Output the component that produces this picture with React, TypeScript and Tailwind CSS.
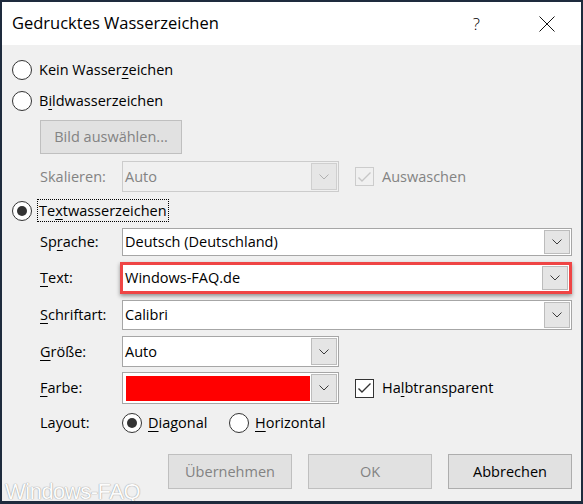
import type { ReactNode } from 'react';
import clsx from 'clsx';

function Chevron({ muted = false }: { muted?: boolean }) {
  return (
    <svg width="10" height="6" viewBox="0 0 10 6" fill="none">
      <path d="M0.5 0.5L5 5L9.5 0.5" stroke={muted ? '#b0b0b0' : '#3c3c3c'} strokeWidth="1" />
    </svg>
  );
}

function Select({
  children,
  className,
  disabled = false,
  bare = false,
}: {
  children?: ReactNode;
  className?: string;
  disabled?: boolean;
  bare?: boolean;
}) {
  return (
    <div
      className={clsx(
        'flex items-stretch',
        !bare && 'border',
        disabled ? 'border-[#cccccc] bg-[#f0f0f0]' : 'border-[#a6a6a6] bg-white',
        className,
      )}
    >
      <div className={clsx('flex flex-1 items-center pl-[2px]', disabled ? 'text-[#838383]' : 'text-black')}>
        {children}
      </div>
      <div
        className={clsx(
          'm-[1px] flex w-[26px] shrink-0 items-center justify-center border',
          disabled ? 'border-[#cfcfcf] bg-[#e6e6e6]' : 'border-[#bcbcbc] bg-[#e5e5e5]',
        )}
      >
        <Chevron muted={disabled} />
      </div>
    </div>
  );
}

function Radio({ checked = false }: { checked?: boolean }) {
  return (
    <div className="flex h-[20px] w-[20px] shrink-0 items-center justify-center rounded-full border border-[#333333] bg-white">
      {checked && <div className="h-[10px] w-[10px] rounded-full bg-[#333333]" />}
    </div>
  );
}

function Checkbox({ checked = false, disabled = false }: { checked?: boolean; disabled?: boolean }) {
  return (
    <div
      className={clsx(
        'flex h-[19px] w-[19px] shrink-0 items-center justify-center border',
        disabled ? 'border-[#cccccc] bg-[#f0f0f0]' : 'border-[#333333] bg-white',
      )}
    >
      {checked && (
        <svg width="15" height="12" viewBox="0 0 15 12" fill="none">
          <path d="M1.5 6.5L5 10L13.5 1.5" stroke={disabled ? '#c6c6c6' : '#333333'} strokeWidth="1.4" />
        </svg>
      )}
    </div>
  );
}

function Key({ children }: { children: ReactNode }) {
  return <span className="underline underline-offset-[3px] decoration-1">{children}</span>;
}

function Label({ children, muted = false, w = 'w-[82px]' }: { children: ReactNode; muted?: boolean; w?: string }) {
  return <div className={clsx('ml-[28px] shrink-0', w, muted ? 'text-[#838383]' : 'text-black')}>{children}</div>;
}

function Button({ children, disabled = false }: { children: ReactNode; disabled?: boolean }) {
  return (
    <div
      className={clsx(
        'flex h-[35px] w-[124px] items-center justify-center border bg-[#e1e1e1]',
        disabled ? 'border-[#bfbfbf] text-[#838383]' : 'border-[#adadad] text-black',
      )}
    >
      {children}
    </div>
  );
}

export default function App() {
  return (
    <div className="relative flex h-[504px] w-[583px] flex-col overflow-hidden border-2 border-b-[3px] border-[#1e2b3d] bg-[#f0f0f0] font-['Open_Sans','Noto_Sans',sans-serif] text-[14.5px] text-black">
      <div className="flex h-[43px] shrink-0 items-center bg-white pl-[10px]">
        <div className="text-[16.5px]">Gedrucktes Wasserzeichen</div>
        <div className="ml-auto mr-[59px] text-[17px] font-light">?</div>
        <svg width="16" height="16" viewBox="0 0 16 16" className="mr-[26px]">
          <path d="M0.5 0.5L15.5 15.5M15.5 0.5L0.5 15.5" stroke="#111111" strokeWidth="1" />
        </svg>
      </div>

      <div className="flex flex-col pl-[10px] pr-[9px]">
        <div className="mt-[14px] flex h-[22px] items-center">
          <Radio />
          <span className="ml-[7px]">
            Kein Wasser<Key>z</Key>eichen
          </span>
        </div>
        <div className="mt-[9px] flex h-[22px] items-center">
          <Radio />
          <span className="ml-[7px]">
            B<Key>i</Key>ldwasserzeichen
          </span>
        </div>
        <div className="ml-[28px] mt-[8px] flex h-[34px] w-[142px] items-center justify-center border border-[#bfbfbf] bg-[#e1e1e1] text-[#838383]">
          Bild auswählen...
        </div>
        <div className="mt-[7px] flex h-[31px] items-center">
          <Label muted>Skalieren:</Label>
          <Select disabled className="h-full w-[217px]">
            Auto
          </Select>
          <div className="ml-[16px]">
            <Checkbox checked disabled />
          </div>
          <span className="ml-[8px] text-[#838383]">Auswaschen</span>
        </div>
        <div className="mt-[7px] flex h-[23px] items-center">
          <Radio checked />
          <span className="ml-[5px] flex h-full items-center border border-dotted border-black px-[1px]">
            Te<Key>x</Key>twasserzeichen
          </span>
        </div>
        <div className="mt-[6px] flex h-[28px] items-center">
          <Label>
            Sp<Key>r</Key>ache:
          </Label>
          <Select className="h-full flex-1">Deutsch (Deutschland)</Select>
        </div>
        <div className="mt-[6px] flex h-[32px] items-center">
          <Label w="w-[80px]">
            <Key>T</Key>ext:
          </Label>
          <div className="h-full flex-1 border-[3px] border-[#ef4545] shadow-[0_2px_4px_rgba(0,0,0,0.4)]">
            <Select bare className="h-full">
              Windows-FAQ.de
            </Select>
          </div>
        </div>
        <div className="mt-[6px] flex h-[30px] items-center">
          <Label>
            <Key>S</Key>chriftart:
          </Label>
          <Select className="h-full flex-1">Calibri</Select>
        </div>
        <div className="mt-[6px] flex h-[31px] items-center">
          <Label>
            <Key>G</Key>röße:
          </Label>
          <Select className="h-full w-[217px]">Auto</Select>
        </div>
        <div className="mt-[5px] flex h-[32px] items-center">
          <Label>
            <Key>F</Key>arbe:
          </Label>
          <Select className="h-full w-[217px]">
            <div className="ml-[1px] h-[25px] w-[184px] bg-[#ff0000]" />
          </Select>
          <div className="ml-[16px]">
            <Checkbox checked />
          </div>
          <span className="ml-[8px]">
            Ha<Key>l</Key>btransparent
          </span>
        </div>
        <div className="mt-[8px] flex h-[22px] items-center">
          <Label>Layout:</Label>
          <div className="flex w-[107px] items-center">
            <Radio checked />
            <span className="ml-[6px]">
              <Key>D</Key>iagonal
            </span>
          </div>
          <div className="flex items-center">
            <Radio />
            <span className="ml-[6px]">
              <Key>H</Key>orizontal
            </span>
          </div>
        </div>
        <div className="mt-[20px] flex justify-end gap-[16px]">
          <Button disabled>Übernehmen</Button>
          <Button disabled>OK</Button>
          <Button>Abbrechen</Button>
        </div>
      </div>

      <div className="pointer-events-none absolute bottom-[-7px] left-[3px] font-['Liberation_Sans',sans-serif] text-[22px] tracking-[-0.5px] text-white opacity-80 [text-shadow:0_0_1px_#8a8a8a,0_0_1px_#8a8a8a]">
        Windows-FAQ
      </div>
    </div>
  );
}
